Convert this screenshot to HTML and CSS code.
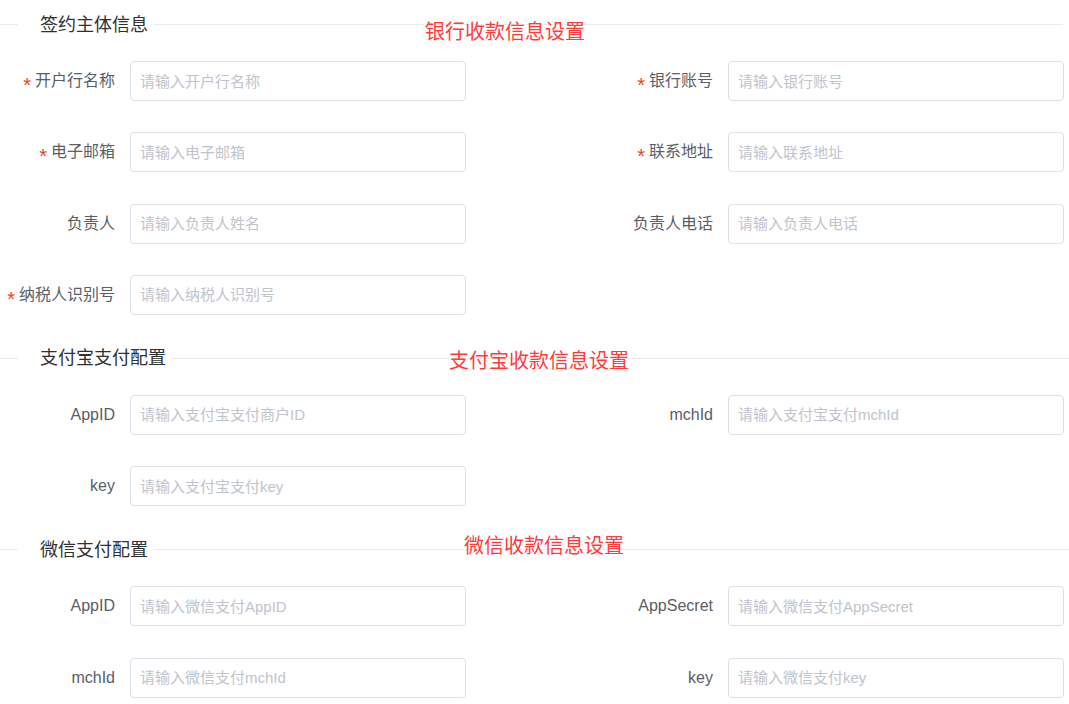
FILE: index.html
```html
<!DOCTYPE html>
<html lang="zh-CN">
<head>
<meta charset="utf-8">
<title>收款信息设置</title>
<link rel="stylesheet" href="styles.css">
</head>
<body>
<div class="page">
  <section class="sec sec-first">
    <div class="divider divider-short">
      <span class="divider-lead"></span>
      <span class="divider-text">签约主体信息</span>
      <span class="divider-line"></span>
      <span class="note note-bank">银行收款信息设置</span>
    </div>
    <div class="form-grid">
      <div class="form-item">
        <label class="label"><span class="req">*</span>开户行名称</label>
        <input class="input" type="text" placeholder="请输入开户行名称">
      </div>
      <div class="form-item">
        <label class="label"><span class="req">*</span>银行账号</label>
        <input class="input" type="text" placeholder="请输入银行账号">
      </div>
      <div class="form-item">
        <label class="label"><span class="req">*</span>电子邮箱</label>
        <input class="input" type="text" placeholder="请输入电子邮箱">
      </div>
      <div class="form-item">
        <label class="label"><span class="req">*</span>联系地址</label>
        <input class="input" type="text" placeholder="请输入联系地址">
      </div>
      <div class="form-item">
        <label class="label">负责人</label>
        <input class="input" type="text" placeholder="请输入负责人姓名">
      </div>
      <div class="form-item">
        <label class="label">负责人电话</label>
        <input class="input" type="text" placeholder="请输入负责人电话">
      </div>
      <div class="form-item">
        <label class="label"><span class="req">*</span>纳税人识别号</label>
        <input class="input" type="text" placeholder="请输入纳税人识别号">
      </div>
    </div>
  </section>

  <section class="sec">
    <div class="divider">
      <span class="divider-lead"></span>
      <span class="divider-text">支付宝支付配置</span>
      <span class="divider-line"></span>
      <span class="note note-alipay">支付宝收款信息设置</span>
    </div>
    <div class="form-grid">
      <div class="form-item">
        <label class="label">AppID</label>
        <input class="input" type="text" placeholder="请输入支付宝支付商户ID">
      </div>
      <div class="form-item">
        <label class="label">mchId</label>
        <input class="input" type="text" placeholder="请输入支付宝支付mchId">
      </div>
      <div class="form-item">
        <label class="label">key</label>
        <input class="input" type="text" placeholder="请输入支付宝支付key">
      </div>
    </div>
  </section>

  <section class="sec">
    <div class="divider">
      <span class="divider-lead"></span>
      <span class="divider-text">微信支付配置</span>
      <span class="divider-line"></span>
      <span class="note note-wechat">微信收款信息设置</span>
    </div>
    <div class="form-grid">
      <div class="form-item">
        <label class="label">AppID</label>
        <input class="input" type="text" placeholder="请输入微信支付AppID">
      </div>
      <div class="form-item">
        <label class="label">AppSecret</label>
        <input class="input" type="text" placeholder="请输入微信支付AppSecret">
      </div>
      <div class="form-item">
        <label class="label">mchId</label>
        <input class="input" type="text" placeholder="请输入微信支付mchId">
      </div>
      <div class="form-item">
        <label class="label">key</label>
        <input class="input" type="text" placeholder="请输入微信支付key">
      </div>
    </div>
  </section>
</div>
</body>
</html>
```

FILE: styles.css
```css
html, body {
  margin: 0;
  padding: 0;
  background: #fff;
}

body {
  font-family: "Liberation Sans", "Noto Sans CJK SC", sans-serif;
  color: #606266;
  overflow: hidden;
}

.page {
  width: 1069px;
}

.sec {
  padding-top: 43px;
}

.sec-first {
  padding-top: 24px;
}

.divider {
  position: relative;
  display: flex;
  align-items: center;
  height: 1px;
  width: 1069px;
}

.divider-short {
  width: 1063px;
}

.divider-lead {
  width: 18px;
  height: 1px;
  background: #e8eaec;
  flex: none;
}

.divider-line {
  flex: 1;
  height: 1px;
  background: #e8eaec;
}

.divider-text {
  flex: none;
  padding: 0 6px 0 22px;
  font-size: 18px;
  line-height: 24px;
  color: #303133;
  white-space: nowrap;
}

.note {
  position: absolute;
  font-size: 20px;
  line-height: 20px;
  color: #ff3b3b;
  white-space: nowrap;
}

.note-bank {
  left: 425px;
  top: -2px;
}

.note-alipay {
  left: 449px;
  top: -7px;
}

.note-wechat {
  left: 464px;
  top: -13px;
}

.form-grid {
  margin-top: 36px;
  display: grid;
  grid-template-columns: 466px 466px;
  column-gap: 132px;
  row-gap: 31.33px;
}

.form-item {
  display: flex;
  height: 40px;
}

.label {
  width: 130px;
  flex: none;
  box-sizing: border-box;
  padding-right: 15px;
  text-align: right;
  font-size: 16px;
  line-height: 40px;
  color: #5a5e66;
  white-space: nowrap;
}

.req {
  color: #ee3f1e;
  margin-right: 4px;
  font-size: 20px;
  line-height: 1;
  vertical-align: -6px;
}

.input {
  width: 336px;
  height: 40px;
  box-sizing: border-box;
  border: 1px solid #dcdfe6;
  border-radius: 4px;
  padding: 0 9px;
  margin: 0;
  font-family: "Liberation Sans", "Noto Sans CJK SC", sans-serif;
  font-size: 15px;
  color: #606266;
  background: #fff;
  outline: none;
}

.input::placeholder {
  color: #c0c4cc;
  opacity: 1;
}
```
